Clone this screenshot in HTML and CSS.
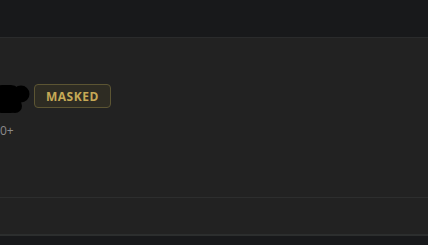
FILE: index.html
```html
<!DOCTYPE html>
<html>
<head>
<meta charset="utf-8">
<link rel="stylesheet" href="styles.css">
</head>
<body>
<header class="topbar"></header>
<section class="panel">
  <div class="name-row">
    <svg class="scribble" width="30" height="29" viewBox="0 0 30 29">
      <rect x="-8" y="0" width="29" height="28" rx="10" fill="#000"/>
      <circle cx="21" cy="9" r="8.5" fill="#000"/>
      <ellipse cx="15" cy="21" rx="7" ry="7" fill="#000"/>
    </svg>
    <span class="badge">MASKED</span>
  </div>
  <div class="meta">0+</div>
</section>
<section class="strip"></section>
<footer class="bottom"></footer>
</body>
</html>
```
FILE: styles.css
```css
html, body {
  margin: 0;
  padding: 0;
  background: #18191b;
  font-family: "Open Sans", "Noto Sans", sans-serif;
}
.topbar {
  height: 37px;
  background: #18191b;
  border-bottom: 1px solid #2a2b2c;
}
.panel {
  height: 160px;
  background: #222222;
  border-bottom: 1px solid #2d2e2e;
  display: flex;
  flex-direction: column;
  padding-top: 46px;
  box-sizing: border-box;
}
.name-row {
  display: flex;
  align-items: flex-start;
  gap: 4px;
  height: 24px;
}
.scribble {
  display: block;
  margin-top: 1px;
}
.badge {
  box-sizing: border-box;
  height: 24px;
  padding: 0 11px;
  display: flex;
  align-items: center;
  border: 1px solid #5c5533;
  border-radius: 4px;
  background: #2e2c23;
  color: #c6a956;
  font-size: 12px;
  font-weight: 700;
  letter-spacing: 0.5px;
}
.meta {
  margin-top: 16px;
  color: #8c8c8c;
  font-size: 12px;
  line-height: 14px;
}
.strip {
  height: 38px;
  box-sizing: border-box;
  background: #222222;
  border-bottom: 2px solid #2c2e2e;
}
.bottom {
  height: 10px;
}
```
